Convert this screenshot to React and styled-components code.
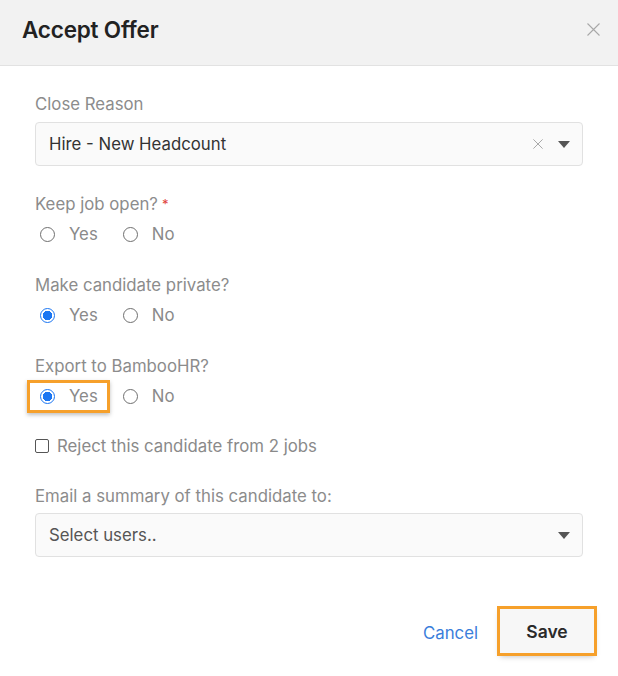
import styled, { createGlobalStyle } from "styled-components";

const GlobalStyle = createGlobalStyle`
  body {
    margin: 0;
    background: #fff;
    font-family: Inter, "Noto Sans", sans-serif;
  }
`;

const Modal = styled.div`
  width: 618px;
  height: 676px;
  background: #fff;
  display: flex;
  flex-direction: column;
`;

const Header = styled.div`
  height: 66px;
  background: #f2f2f2;
  border-bottom: 1px solid #e2e2e2;
  display: flex;
  align-items: center;
  justify-content: space-between;
  padding: 0 18px 6px 22px;
  box-sizing: border-box;
`;

const Title = styled.h1`
  margin: 0;
  font-size: 22.5px;
  font-weight: 600;
  color: #222;
  letter-spacing: -0.2px;
`;

const CloseButton = styled.button`
  border: none;
  background: none;
  padding: 0;
  width: 13px;
  height: 13px;
  display: flex;
  cursor: pointer;
`;

const Body = styled.div`
  padding: 28px 35px 0 35px;
  display: flex;
  flex-direction: column;
`;

const Label = styled.div`
  font-size: 16.8px;
  line-height: 20px;
  color: #8c8c8c;
  margin-top: ${(p) => p.$top || 0}px;
`;

const Required = styled.span`
  color: #e0413a;
  font-size: 13px;
  margin-left: 4px;
  vertical-align: top;
`;

const Select = styled.div`
  margin-top: ${(p) => p.$top}px;
  height: 44px;
  box-sizing: border-box;
  border: 1px solid #e1e1e1;
  border-radius: 4px;
  background: #fafafa;
  display: flex;
  align-items: center;
  padding: 0 12px 0 13px;
  gap: 15px;
`;

const SelectValue = styled.span`
  flex: 1;
  font-size: 16.8px;
  color: ${(p) => (p.$placeholder ? "#555" : "#333")};
`;

const Arrow = styled.span`
  width: 0;
  height: 0;
  border-left: 6.5px solid transparent;
  border-right: 6.5px solid transparent;
  border-top: 7px solid #555;
`;

const RadioRow = styled.div`
  margin-top: 10px;
  height: 20px;
  display: flex;
  align-items: center;
  padding-left: 5px;
  gap: 25px;
`;

const Option = styled.label`
  position: relative;
  display: flex;
  align-items: center;
  gap: 14px;
  font-size: 16.8px;
  color: #8a8a8a;
  cursor: pointer;

  ${(p) =>
    p.$highlight &&
    `
    &::after {
      content: "";
      position: absolute;
      top: -6px;
      bottom: -7px;
      left: -13px;
      right: -12px;
      border: 3px solid #f6a02b;
      box-shadow: 0 2px 4px rgba(0, 0, 0, 0.25);
      pointer-events: none;
    }
  `}
`;

const RadioDot = styled.span`
  width: 15px;
  height: 15px;
  box-sizing: border-box;
  border-radius: 50%;
  border: 1px solid ${(p) => (p.$checked ? "#1b76f2" : "#6f6f6f")};
  background: ${(p) =>
    p.$checked
      ? "radial-gradient(circle, #1b76f2 0 4.5px, #fff 5px)"
      : "#fff"};
`;

const CheckRow = styled.label`
  margin-top: 30px;
  height: 20px;
  display: flex;
  align-items: center;
  gap: 8px;
  font-size: 16.8px;
  color: #8a8a8a;
`;

const CheckBox = styled.span`
  width: 14px;
  height: 14px;
  box-sizing: border-box;
  border: 1px solid #555;
  border-radius: 2px;
  background: #fff;
`;

const Footer = styled.div`
  margin-top: auto;
  padding: 0 24px 23px 0;
  display: flex;
  justify-content: flex-end;
  align-items: center;
  gap: 22px;
`;

const CancelLink = styled.button`
  border: none;
  background: none;
  padding: 4px 0 0;
  font-family: inherit;
  font-size: 16.8px;
  color: #3a7edb;
  cursor: pointer;
`;

const SaveButton = styled.button`
  width: 94px;
  height: 44px;
  border: none;
  border-radius: 0;
  background: #f7f7f7;
  font-family: inherit;
  font-size: 17.5px;
  font-weight: 600;
  color: #2a2a2a;
  outline: 3px solid #f6a02b;
  box-shadow: 0 3px 6px rgba(0, 0, 0, 0.28);
  cursor: pointer;
`;

const XIcon = ({ size, color }) => (
  <svg width={size} height={size} viewBox="0 0 13 13">
    <path d="M0.5 0.5 L12.5 12.5 M12.5 0.5 L0.5 12.5" stroke={color} strokeWidth="1.1" fill="none" />
  </svg>
);

const RadioGroup = ({ value, highlight }) => (
  <RadioRow>
    <Option $highlight={highlight}>
      <RadioDot $checked={value === "yes"} />
      Yes
    </Option>
    <Option>
      <RadioDot $checked={value === "no"} />
      No
    </Option>
  </RadioRow>
);

export default function App() {
  return (
    <>
      <GlobalStyle />
      <Modal>
        <Header>
          <Title>Accept Offer</Title>
          <CloseButton>
            <XIcon size={13} color="#a8a8a8" />
          </CloseButton>
        </Header>
        <Body>
          <Label>Close Reason</Label>
          <Select $top={8}>
            <SelectValue>Hire - New Headcount</SelectValue>
            <XIcon size={10} color="#999" />
            <Arrow />
          </Select>

          <Label $top={28}>
            Keep job open?<Required>*</Required>
          </Label>
          <RadioGroup />

          <Label $top={31}>Make candidate private?</Label>
          <RadioGroup value="yes" />

          <Label $top={31}>Export to BambooHR?</Label>
          <RadioGroup value="yes" highlight />

          <CheckRow>
            <CheckBox />
            Reject this candidate from 2 jobs
          </CheckRow>

          <Label $top={30}>Email a summary of this candidate to:</Label>
          <Select $top={7}>
            <SelectValue $placeholder>Select users..</SelectValue>
            <Arrow />
          </Select>
        </Body>
        <Footer>
          <CancelLink>Cancel</CancelLink>
          <SaveButton>Save</SaveButton>
        </Footer>
      </Modal>
    </>
  );
}
